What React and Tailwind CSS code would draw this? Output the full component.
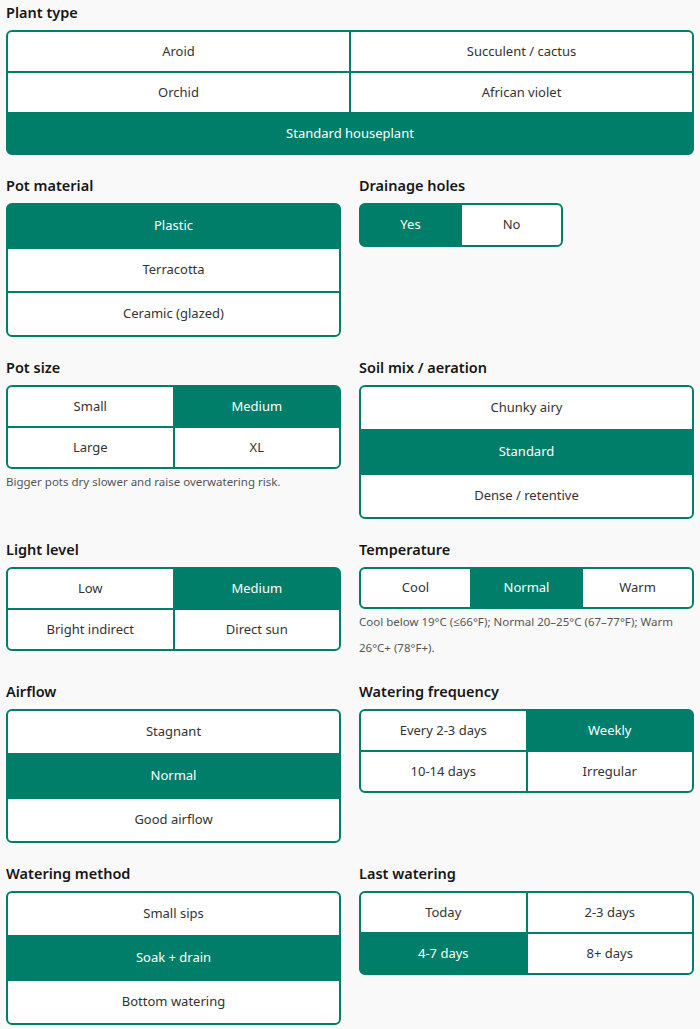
import React, { useState } from 'react';

const font = { fontFamily: '"Noto Sans", "Open Sans", sans-serif' };

function Cell({ label, active, onClick, className = '' }) {
  return (
    <button
      onClick={onClick}
      className={
        'flex items-center justify-center text-[13px] ' +
        (active ? 'bg-[#017e69] text-white' : 'bg-white text-[#333]') +
        ' ' +
        className
      }
    >
      {label}
    </button>
  );
}

function Field({ title, hint, children }) {
  return (
    <div>
      <h3 className="text-[14.5px] leading-5 font-semibold text-[#161616] mb-2">{title}</h3>
      {children}
      {hint && <p className="text-[11.5px] leading-[26px] text-[#555]">{hint}</p>}
    </div>
  );
}

function Options({ options, value, onChange, cols = 1, h = 'h-[42px]', wide, boxClass = '' }) {
  const colClass = { 1: 'grid-cols-1', 2: 'grid-cols-2', 3: 'grid-cols-3' }[cols];
  return (
    <div
      className={
        'grid gap-[2px] rounded-md border-2 border-[#017e69] bg-[#017e69] overflow-hidden ' +
        colClass +
        ' ' +
        boxClass
      }
    >
      {options.map((o) => (
        <Cell
          key={o}
          label={o}
          active={o === value}
          onClick={() => onChange(o)}
          className={h + (o === wide ? ' col-span-2' : '')}
        />
      ))}
    </div>
  );
}

export default function App() {
  const [s, setS] = useState({
    plant: 'Standard houseplant',
    material: 'Plastic',
    drainage: 'Yes',
    size: 'Medium',
    soil: 'Standard',
    light: 'Medium',
    temp: 'Normal',
    airflow: 'Normal',
    freq: 'Weekly',
    method: 'Soak + drain',
    last: '4-7 days',
  });
  const set = (k) => (v) => setS((p) => ({ ...p, [k]: v }));

  return (
    <div className="min-h-screen bg-[#f9f9fa] px-[6px] pt-[2px] pb-6" style={font}>
      <Field title="Plant type">
        <Options
          options={['Aroid', 'Succulent / cactus', 'Orchid', 'African violet', 'Standard houseplant']}
          value={s.plant}
          onChange={set('plant')}
          cols={2}
          h="h-[39px]"
          wide="Standard houseplant"
        />
      </Field>

      <div className="grid grid-cols-2 gap-x-[18px] gap-y-5 mt-5">
        <Field title="Pot material">
          <Options
            options={['Plastic', 'Terracotta', 'Ceramic (glazed)']}
            value={s.material}
            onChange={set('material')}
          />
        </Field>
        <Field title="Drainage holes">
          <Options
            options={['Yes', 'No']}
            value={s.drainage}
            onChange={set('drainage')}
            cols={2}
            h="h-[40px]"
            boxClass="w-[204px]"
          />
        </Field>

        <Field title="Pot size" hint="Bigger pots dry slower and raise overwatering risk.">
          <Options
            options={['Small', 'Medium', 'Large', 'XL']}
            value={s.size}
            onChange={set('size')}
            cols={2}
            h="h-[39px]"
          />
        </Field>
        <Field title="Soil mix / aeration">
          <Options
            options={['Chunky airy', 'Standard', 'Dense / retentive']}
            value={s.soil}
            onChange={set('soil')}
          />
        </Field>

        <Field title="Light level">
          <Options
            options={['Low', 'Medium', 'Bright indirect', 'Direct sun']}
            value={s.light}
            onChange={set('light')}
            cols={2}
            h="h-[39px]"
          />
        </Field>
        <Field
          title="Temperature"
          hint="Cool below 19°C (≤66°F); Normal 20–25°C (67–77°F); Warm 26°C+ (78°F+)."
        >
          <Options
            options={['Cool', 'Normal', 'Warm']}
            value={s.temp}
            onChange={set('temp')}
            cols={3}
            h="h-[38px]"
          />
        </Field>

        <Field title="Airflow">
          <Options
            options={['Stagnant', 'Normal', 'Good airflow']}
            value={s.airflow}
            onChange={set('airflow')}
          />
        </Field>
        <Field title="Watering frequency">
          <Options
            options={['Every 2-3 days', 'Weekly', '10-14 days', 'Irregular']}
            value={s.freq}
            onChange={set('freq')}
            cols={2}
            h="h-[39px]"
          />
        </Field>

        <Field title="Watering method">
          <Options
            options={['Small sips', 'Soak + drain', 'Bottom watering']}
            value={s.method}
            onChange={set('method')}
          />
        </Field>
        <Field title="Last watering">
          <Options
            options={['Today', '2-3 days', '4-7 days', '8+ days']}
            value={s.last}
            onChange={set('last')}
            cols={2}
            h="h-[39px]"
          />
        </Field>
      </div>
    </div>
  );
}
